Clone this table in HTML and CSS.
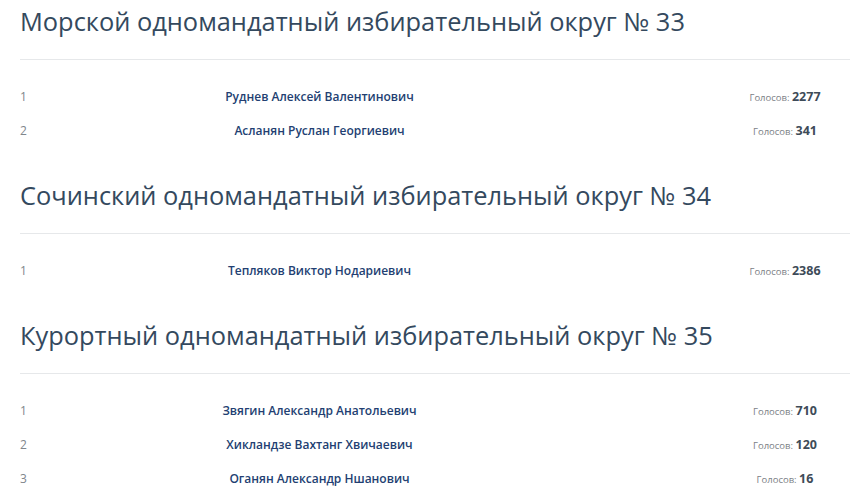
FILE: index.html
```html
<!DOCTYPE html>
<html lang="ru">
<head>
<meta charset="utf-8">
<title>Одномандатные округа</title>
<link rel="stylesheet" href="styles.css">
</head>
<body>
<main class="page">
  <section class="district">
    <h2 class="district-title">Морской одномандатный избирательный округ № 33</h2>
    <div class="rule"></div>
    <div class="row"><span class="num">1</span><span class="name">Руднев Алексей Валентинович</span><span class="spacer"></span><span class="votes">Голосов: <b>2277</b></span></div>
    <div class="row"><span class="num">2</span><span class="name">Асланян Руслан Георгиевич</span><span class="spacer"></span><span class="votes">Голосов: <b>341</b></span></div>
  </section>
  <section class="district">
    <h2 class="district-title">Сочинский одномандатный избирательный округ № 34</h2>
    <div class="rule"></div>
    <div class="row"><span class="num">1</span><span class="name">Тепляков Виктор Нодариевич</span><span class="spacer"></span><span class="votes">Голосов: <b>2386</b></span></div>
  </section>
  <section class="district">
    <h2 class="district-title">Курортный одномандатный избирательный округ № 35</h2>
    <div class="rule"></div>
    <div class="row"><span class="num">1</span><span class="name">Звягин Александр Анатольевич</span><span class="spacer"></span><span class="votes">Голосов: <b>710</b></span></div>
    <div class="row"><span class="num">2</span><span class="name">Хикландзе Вахтанг Хвичаевич</span><span class="spacer"></span><span class="votes">Голосов: <b>120</b></span></div>
    <div class="row"><span class="num">3</span><span class="name">Оганян Александр Ншанович</span><span class="spacer"></span><span class="votes">Голосов: <b>16</b></span></div>
  </section>
</main>
</body>
</html>
```

FILE: styles.css
```css
html, body {
  margin: 0;
  padding: 0;
  background: #ffffff;
}

body {
  font-family: "Open Sans", "Noto Sans", sans-serif;
  color: #34495e;
}

.page {
  padding: 3px 0 0 20px;
}

.district + .district {
  margin-top: 29px;
}

.district-title {
  margin: 0;
  font-size: 25.4px;
  line-height: 36px;
  font-weight: 400;
  color: #34495e;
}

.rule {
  height: 1px;
  background: #e6e8ea;
  margin: 20px 0 20px 0;
}

.row {
  display: grid;
  grid-template-columns: 100px 399px 1fr 130px;
  align-items: baseline;
  height: 34px;
  line-height: 34px;
}

.num {
  font-size: 12px;
  color: #80868c;
}

.name {
  justify-self: center;
  font-size: 12px;
  font-weight: 600;
  color: #233f72;
}

.votes {
  justify-self: center;
  font-size: 9.5px;
  color: #7b8085;
}

.votes b {
  font-size: 12.5px;
  font-weight: 700;
  color: #3e4b58;
}
```
